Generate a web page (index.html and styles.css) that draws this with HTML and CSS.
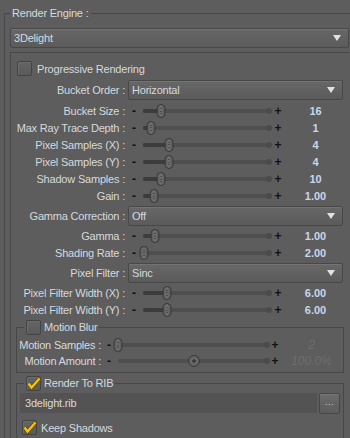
FILE: index.html
```html
<!DOCTYPE html>
<html lang="en">
<head>
    <meta charset="UTF-8">
    <meta name="viewport" content="width=device-width, initial-scale=1.0">
    <title>Render Settings</title>
    <link rel="stylesheet" href="styles.css">
</head>
<body>

    <fieldset class="engine">
        <legend class="group-title">Render Engine :</legend>
        <div class="combo"><span>3Delight</span><span class="arrow"></span></div>

        <div class="frame">
            <div class="check-row progressive"><span class="checkbox"></span>Progressive Rendering</div>

            <div class="combo-row first">
                <span class="label">Bucket Order :</span>
                <div class="combo"><span>Horizontal</span><span class="arrow"></span></div>
            </div>

            <div class="slider-row">
                <span class="label">Bucket Size :</span><span class="minus">-</span>
                <span class="track"><span class="fill" style="width:14%"></span><span class="knob" style="left:14%"></span></span>
                <span class="plus">+</span><span class="value">16</span>
            </div>
            <div class="slider-row">
                <span class="label">Max Ray Trace Depth :</span><span class="minus">-</span>
                <span class="track"><span class="fill" style="width:6%"></span><span class="knob" style="left:6%"></span></span>
                <span class="plus">+</span><span class="value">1</span>
            </div>
            <div class="slider-row">
                <span class="label">Pixel Samples (X) :</span><span class="minus">-</span>
                <span class="track"><span class="fill" style="width:20.5%"></span><span class="knob" style="left:20.5%"></span></span>
                <span class="plus">+</span><span class="value">4</span>
            </div>
            <div class="slider-row">
                <span class="label">Pixel Samples (Y) :</span><span class="minus">-</span>
                <span class="track"><span class="fill" style="width:20.5%"></span><span class="knob" style="left:20.5%"></span></span>
                <span class="plus">+</span><span class="value">4</span>
            </div>
            <div class="slider-row">
                <span class="label">Shadow Samples :</span><span class="minus">-</span>
                <span class="track"><span class="fill" style="width:14%"></span><span class="knob" style="left:14%"></span></span>
                <span class="plus">+</span><span class="value">10</span>
            </div>
            <div class="slider-row">
                <span class="label">Gain :</span><span class="minus">-</span>
                <span class="track"><span class="fill" style="width:9%"></span><span class="knob" style="left:9%"></span></span>
                <span class="plus">+</span><span class="value">1.00</span>
            </div>

            <div class="combo-row">
                <span class="label">Gamma Correction :</span>
                <div class="combo"><span>Off</span><span class="arrow"></span></div>
            </div>

            <div class="slider-row">
                <span class="label">Gamma :</span><span class="minus">-</span>
                <span class="track"><span class="fill" style="width:9.5%"></span><span class="knob" style="left:9.5%"></span></span>
                <span class="plus">+</span><span class="value">1.00</span>
            </div>
            <div class="slider-row">
                <span class="label">Shading Rate :</span><span class="minus">-</span>
                <span class="track"><span class="fill" style="width:1%"></span><span class="knob" style="left:1%"></span></span>
                <span class="plus">+</span><span class="value">2.00</span>
            </div>

            <div class="combo-row">
                <span class="label">Pixel Filter :</span>
                <div class="combo"><span>Sinc</span><span class="arrow"></span></div>
            </div>

            <div class="slider-row">
                <span class="label">Pixel Filter Width (X) :</span><span class="minus">-</span>
                <span class="track"><span class="fill" style="width:19%"></span><span class="knob" style="left:19%"></span></span>
                <span class="plus">+</span><span class="value">6.00</span>
            </div>
            <div class="slider-row">
                <span class="label">Pixel Filter Width (Y) :</span><span class="minus">-</span>
                <span class="track"><span class="fill" style="width:19%"></span><span class="knob" style="left:19%"></span></span>
                <span class="plus">+</span><span class="value">6.00</span>
            </div>

            <fieldset class="sub-group motion">
                <legend class="check-legend"><span class="checkbox"></span>Motion Blur</legend>
                <div class="slider-row small">
                    <span class="label">Motion Samples :</span><span class="minus">-</span>
                    <span class="track"><span class="knob" style="left:0%"></span></span>
                    <span class="plus">+</span><span class="value disabled">2</span>
                </div>
                <div class="slider-row small">
                    <span class="label">Motion Amount :</span><span class="minus">-</span>
                    <span class="track"><span class="knob round" style="left:50.5%"></span></span>
                    <span class="plus">+</span><span class="value disabled">100.0%</span>
                </div>
            </fieldset>

            <fieldset class="sub-group rib">
                <legend class="check-legend"><span class="checkbox checked"><svg viewBox="0 0 16 16"><polyline points="2.5,7.5 5.5,11.5 13.5,2.5" class="check-shade"/><polyline points="2.5,7.5 5.5,11.5 13.5,2.5" class="check-mark"/></svg></span>Render To RIB</legend>
                <div class="file-row">
                    <div class="text-field">3delight.rib</div>
                    <div class="browse">...</div>
                </div>
                <div class="check-row keep"><span class="checkbox checked"><svg viewBox="0 0 16 16"><polyline points="2.5,7.5 5.5,11.5 13.5,2.5" class="check-shade"/><polyline points="2.5,7.5 5.5,11.5 13.5,2.5" class="check-mark"/></svg></span>Keep Shadows</div>
            </fieldset>
        </div>
    </fieldset>

</body>
</html>
```

FILE: styles.css
```css
* {
  box-sizing: border-box;
}

body {
  margin: 0;
  width: 350px;
  height: 438px;
  overflow: hidden;
  background: #5d5d5d;
  color: #d6d9de;
  font: 11px/14px "Liberation Sans", Arial, sans-serif;
  letter-spacing: -0.2px;
}

fieldset {
  min-width: 0;
  margin: 0;
  border: 1px solid #474747;
}

.engine {
  width: 346px;
  margin: 6px 0 0 4px;
  padding: 8px 1px 0 5px;
  border-right: none;
  border-bottom: none;
}

.group-title {
  margin-left: 0;
  padding: 0 2px;
  line-height: 14px;
}

/* combo boxes */
.combo {
  display: flex;
  height: 20px;
  align-items: center;
  justify-content: space-between;
  padding: 0 7px 0 3px;
  border: 1px solid #484848;
  border-radius: 2px;
  background: linear-gradient(#676767, #5b5b5b);
  box-shadow: inset 0 1px #737373;
}

.arrow {
  width: 0;
  height: 0;
  border-left: 4px solid transparent;
  border-right: 4px solid transparent;
  border-top: 6px solid #e2e2e2;
}

.frame {
  display: flex;
  flex-direction: column;
  margin-top: 4px;
  padding-top: 8px;
  border-top: 1px solid #474747;
  border-left: 1px solid #474747;
}

/* checkboxes */
.check-row {
  display: flex;
  height: 15px;
  align-items: center;
  gap: 4px;
}

.progressive {
  margin: 0 0 4px 6px;
  gap: 5px;
}

.checkbox {
  position: relative;
  flex: none;
  width: 15px;
  height: 15px;
  border: 1px solid #444;
  border-radius: 2px;
  background: linear-gradient(#646464, #5a5a5a);
  box-shadow: inset 1px 1px #6c6c6c;
}

.checkbox svg {
  position: absolute;
  top: -1px;
  left: -1px;
  width: 16px;
  height: 16px;
  overflow: visible;
}

.check-shade {
  fill: none;
  stroke: #5a4300;
  stroke-width: 3.6;
}

.check-mark {
  fill: none;
  stroke: #f6c40e;
  stroke-width: 2.4;
}

/* rows */
.label {
  padding-right: 3px;
  text-align: right;
  white-space: nowrap;
}

.combo-row {
  display: grid;
  grid-template-columns: 117px 1fr;
  align-items: center;
  margin: 2px 0 1px;
}

.combo-row.first {
  margin: 0 0 2px;
}

.combo-row .combo {
  margin-right: 6px;
}

.slider-row {
  display: grid;
  grid-template-columns: 117px 12px 134px 8px 1fr;
  height: 17px;
  align-items: center;
}

.minus,
.plus {
  color: #111;
  font-size: 12px;
  font-weight: bold;
  text-align: center;
}

.value {
  color: #c9d6ea;
  font-weight: bold;
  text-align: center;
  letter-spacing: 0;
}

.value.disabled {
  color: #6d6d6d;
  font-weight: normal;
  font-style: italic;
  font-size: 12px;
}

.track {
  position: relative;
  height: 4px;
  margin: 0 4px 0 3px;
  border-radius: 2px;
  background: #4f4f4f;
}

.track::after {
  content: "";
  position: absolute;
  right: -2px;
  top: -1px;
  width: 6px;
  height: 6px;
  border-radius: 50%;
  background: #4b4b4b;
}

.fill {
  display: block;
  height: 100%;
  border-radius: 2px;
  background: #3c3c3c;
}

.knob {
  position: absolute;
  top: 50%;
  width: 9px;
  height: 14px;
  border: 1px solid #383838;
  border-radius: 5px;
  background: linear-gradient(90deg, #5c5c5c, #707070 50%, #5a5a5a);
  transform: translate(-50%, -50%);
  z-index: 1;
}

.knob::after {
  content: "";
  position: absolute;
  left: 3px;
  top: 3px;
  width: 1px;
  height: 6px;
  background: repeating-linear-gradient(#2e2e2e 0 1px, transparent 1px 2.5px);
}

.knob.round {
  width: 12px;
  height: 12px;
  border-radius: 50%;
  background: radial-gradient(#3a3a3a 0 1.5px, #6c6c6c 2px, #5a5a5a 6px);
}

.knob.round::after {
  display: none;
}

/* group boxes with checkbox titles */
.sub-group {
  width: 328px;
  margin-left: 5px;
}

.check-legend {
  display: flex;
  align-items: center;
  gap: 3px;
  margin-left: 7px;
  padding: 0 2px;
  line-height: 15px;
}

.motion {
  margin-top: 2px;
  padding: 2px 0 3px;
}

.slider-row.small {
  grid-template-columns: 87px 10px 156px 10px 1fr;
  height: 16px;
}

.slider-row.small .track {
  margin: 0 2px 0 4px;
}

.rib {
  height: 80px;
  margin-top: 3px;
  padding: 2px 0 0 3px;
  border-bottom: none;
}

.rib .check-legend {
  margin-left: 4px;
}

.file-row {
  display: flex;
  gap: 2px;
}

.text-field {
  width: 297px;
  height: 20px;
  padding-left: 5px;
  background: #535353;
  line-height: 20px;
}

.browse {
  width: 21px;
  height: 21px;
  border: 1px solid #464646;
  border-radius: 2px;
  background: linear-gradient(#6c6c6c, #5c5c5c);
  box-shadow: inset 0 1px #777;
  color: #d0d0d0;
  font-size: 9px;
  line-height: 16px;
  text-align: center;
  letter-spacing: 0.5px;
}

.keep {
  margin: 6px 0 0 2px;
}
```
